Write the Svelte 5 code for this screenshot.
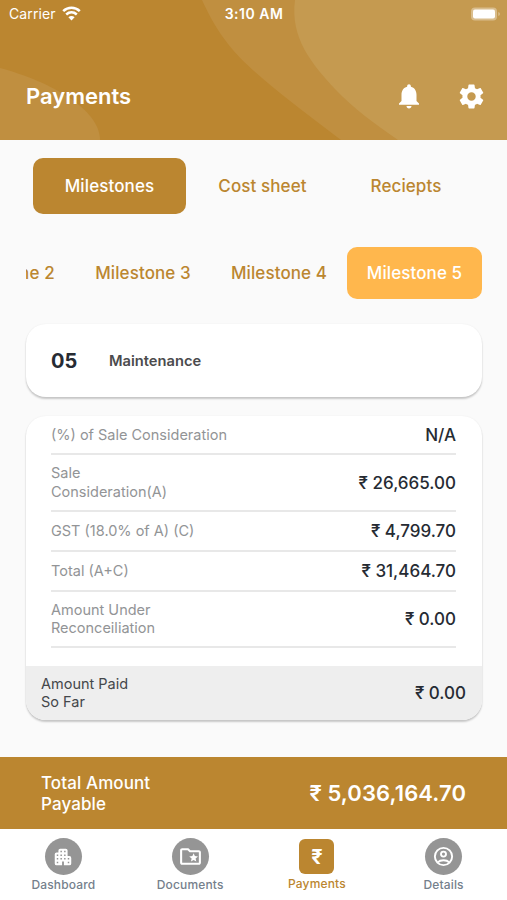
<script lang="ts">
  type Row = { label: string; value: string };

  const tabs = ["Milestones", "Cost sheet", "Reciepts"];
  const milestones = [2, 3, 4, 5];

  const rows: Row[] = [
    { label: "(%) of Sale Consideration", value: "N/A" },
    { label: "Sale\nConsideration(A)", value: "₹ 26,665.00" },
    { label: "GST (18.0% of A) (C)", value: "₹ 4,799.70" },
    { label: "Total (A+C)", value: "₹ 31,464.70" },
    { label: "Amount Under\nReconceiliation", value: "₹ 0.00" },
  ];

  const nav = ["Dashboard", "Documents", "Payments", "Details"];

  let activeTab = $state("Milestones");
  let activeMilestone = $state(5);
  let activeNav = $state("Payments");
</script>

<div class="screen">
  <header>
    <svg class="waves" viewBox="0 0 507 140" preserveAspectRatio="none">
      <path d="M0 68C52 82 100 110 100 140H0Z" fill="#c08f40" />
      <path d="M202 0C220 40 240 59 262 78C286 99 314 119 341 140H507V0Z" fill="#c08f40" />
      <path d="M295 0C290 38 312 64 335 89C354 109 374 123 398 140H507V0Z" fill="#c59a50" />
    </svg>
    <div class="status">
      <span class="carrier">
        Carrier
        <svg width="19" height="15" viewBox="0 0 19 15" fill="none" stroke="#fff" stroke-width="2.6">
          <path d="M1.2 5.1C6 .7 13 .7 17.8 5.1" />
          <path d="M4.2 8.5C7.4 5.7 11.6 5.7 14.8 8.5" />
          <path d="M9.5 14.4L6.4 11.2C8.3 9.6 10.7 9.6 12.6 11.2Z" fill="#fff" stroke="none" />
        </svg>
      </span>
      <span class="time">3:10 AM</span>
      <svg class="battery" width="31" height="16" viewBox="0 0 31 16">
        <rect x="1" y="1.5" width="26" height="13" rx="4" fill="#fff" fill-opacity=".35" />
        <rect x="3" y="3.5" width="22" height="9" rx="2" fill="#fff" />
        <path d="M28.5 6c1.6.7 1.6 3.3 0 4z" fill="#fff" fill-opacity=".5" />
      </svg>
    </div>
    <div class="title-row">
      <h1>Payments</h1>
      <div class="actions">
        <svg width="30" height="30" viewBox="0 0 24 24" fill="#fff">
          <path d="M12 22c1.1 0 2-.9 2-2h-4c0 1.1.89 2 2 2zm6-6v-5c0-3.07-1.64-5.64-4.5-6.32V4c0-.83-.67-1.5-1.5-1.5s-1.5.67-1.5 1.5v.68C7.63 5.36 6 7.92 6 11v5l-2 2v1h16v-1l-2-2z" />
        </svg>
        <svg width="29" height="29" viewBox="0 0 24 24" fill="#fff">
          <path d="M19.43 12.98c.04-.32.07-.64.07-.98s-.03-.66-.07-.98l2.11-1.65c.19-.15.24-.42.12-.64l-2-3.46c-.12-.22-.39-.3-.61-.22l-2.49 1c-.52-.4-1.08-.73-1.69-.98l-.38-2.65C14.46 2.18 14.25 2 14 2h-4c-.25 0-.46.18-.49.42l-.38 2.65c-.61.25-1.17.59-1.69.98l-2.49-1c-.23-.09-.49 0-.61.22l-2 3.46c-.13.22-.07.49.12.64l2.11 1.65c-.04.32-.07.65-.07.98s.03.66.07.98l-2.11 1.65c-.19.15-.24.42-.12.64l2 3.46c.12.22.39.3.61.22l2.49-1c.52.4 1.08.73 1.69.98l.38 2.65c.03.24.24.42.49.42h4c.25 0 .46-.18.49-.42l.38-2.65c.61-.25 1.17-.59 1.69-.98l2.49 1c.23.09.49 0 .61-.22l2-3.46c.12-.22.07-.49-.12-.64l-2.11-1.65zM12 15.5c-1.93 0-3.5-1.57-3.5-3.5s1.57-3.5 3.5-3.5 3.5 1.57 3.5 3.5-1.57 3.5-3.5 3.5z" />
        </svg>
      </div>
    </div>
  </header>

  <main>
    <div class="tabs">
      {#each tabs as tab}
        <button class:active={activeTab === tab} onclick={() => (activeTab = tab)}>{tab}</button>
      {/each}
    </div>

    <div class="milestones">
      {#each milestones as m}
        <button class:active={activeMilestone === m} onclick={() => (activeMilestone = m)}>Milestone {m}</button>
      {/each}
    </div>

    <section class="card stage">
      <strong>05</strong>
      <span>Maintenance</span>
    </section>

    <section class="card details">
      <div class="rows">
        {#each rows as row}
          <div class="row">
            <span class="label">{row.label}</span>
            <span class="value">{row.value}</span>
          </div>
        {/each}
      </div>
      <div class="paid">
        <span class="label">Amount Paid<br />So Far</span>
        <span class="value">₹ 0.00</span>
      </div>
    </section>
  </main>

  <div class="total">
    <span>Total Amount<br />Payable</span>
    <strong>₹ 5,036,164.70</strong>
  </div>

  <nav>
    {#each nav as item}
      <button class:active={activeNav === item} onclick={() => (activeNav = item)}>
        <span class="icon">
          {#if item === "Dashboard"}
            <svg width="22" height="22" viewBox="0 0 24 24" fill="#fff">
              <path fill-rule="evenodd" d="M17 11V5a2 2 0 0 0-2-2H9a2 2 0 0 0-2 2v2H5a2 2 0 0 0-2 2v10a2 2 0 0 0 2 2h6v-4h2v4h6a2 2 0 0 0 2-2v-6a2 2 0 0 0-2-2zM6.8 18.8H5.2v-1.6h1.6zm0-4H5.2v-1.6h1.6zm0-4H5.2V9.2h1.6zm4 4H9.2v-1.6h1.6zm0-4H9.2V9.2h1.6zm0-4H9.2V5.2h1.6zm4 8h-1.6v-1.6h1.6zm0-4h-1.6V9.2h1.6zm0-4h-1.6V5.2h1.6zm4 12h-1.6v-1.6h1.6zm0-4h-1.6v-1.6h1.6z" />
            </svg>
          {:else if item === "Documents"}
            <svg width="25" height="25" viewBox="0 0 24 24" fill="#fff">
              <path d="M20 6h-8l-2-2H4c-1.1 0-2 .9-2 2v12c0 1.1.9 2 2 2h16c1.1 0 2-.9 2-2V8c0-1.1-.9-2-2-2zm0 12H4V6h5.17l2 2H20z" />
              <path d="M15 8.8l1.2 2.8 3 .3-2.3 2 .7 3-2.6-1.6-2.6 1.6.7-3-2.3-2 3-.3z" />
            </svg>
          {:else if item === "Payments"}
            ₹
          {:else}
            <svg width="23" height="23" viewBox="0 0 24 24" fill="none" stroke="#fff" stroke-width="2">
              <circle cx="12" cy="12" r="9" />
              <circle cx="12" cy="9.5" r="2.6" />
              <path d="M6 18.2c2.8-3 9.2-3 12 0" />
            </svg>
          {/if}
        </span>
        <span class="name">{item}</span>
      </button>
    {/each}
  </nav>
</div>

<style>
  :global(body) {
    margin: 0;
    background: #fafafa;
  }

  .screen {
    --gold: #bb8630;
    width: 507px;
    height: 900px;
    display: flex;
    flex-direction: column;
    overflow: hidden;
    background: #fafafa;
    font-family: Inter, "Liberation Sans", sans-serif;
    color: #262b33;
  }

  button {
    border: 0;
    padding: 0;
    background: none;
    font: inherit;
    color: inherit;
    letter-spacing: inherit;
    white-space: nowrap;
  }

  header {
    position: relative;
    flex: none;
    height: 140px;
    background: var(--gold);
    color: #fff;
  }

  .waves {
    position: absolute;
    inset: 0;
    width: 100%;
    height: 100%;
  }

  .status {
    position: relative;
    display: grid;
    grid-template-columns: 1fr auto 1fr;
    align-items: center;
    height: 27px;
    padding: 0 6px 0 9px;
    font-size: 14px;
  }

  .carrier {
    display: flex;
    align-items: center;
    gap: 6px;
    letter-spacing: 0.1px;
  }

  .time {
    position: relative;
    left: -1px;
    font-weight: 600;
    font-size: 14px;
    letter-spacing: 0.5px;
  }

  .battery {
    justify-self: end;
  }

  .title-row {
    position: relative;
    display: flex;
    align-items: center;
    justify-content: space-between;
    height: 52px;
    padding: 43px 21px 0 26px;
  }

  h1 {
    margin: 0;
    font-size: 22px;
    font-weight: 600;
  }

  .actions {
    display: flex;
    align-items: center;
    gap: 33px;
  }

  main {
    flex: 1;
    padding: 18px 25px 0 26px;
  }

  .tabs {
    display: flex;
    height: 56px;
    padding-left: 7px;
    color: var(--gold);
    font-size: 17px;
    font-weight: 500;
    letter-spacing: 0.1px;
  }

  .tabs button {
    width: 153px;
    border-radius: 10px;
  }

  .tabs button:last-child {
    width: 134px;
  }

  .tabs button.active {
    background: var(--gold);
    color: #fff;
  }

  .milestones {
    display: flex;
    justify-content: flex-end;
    height: 52px;
    margin-top: 33px;
    overflow: hidden;
    color: var(--gold);
    font-size: 17px;
    font-weight: 500;
    letter-spacing: 0.1px;
  }

  .milestones button {
    flex: none;
    width: 136px;
    border-radius: 10px;
  }

  .milestones button.active {
    width: 135px;
    background: #ffb74d;
    color: #fff;
  }

  .card {
    background: #fff;
    border-radius: 20px;
    box-shadow: 0 2px 2px rgba(0, 0, 0, 0.2), 0 0 2px rgba(0, 0, 0, 0.06);
  }

  .stage {
    display: flex;
    align-items: center;
    height: 73px;
    margin-top: 25px;
    padding-left: 25px;
  }

  .stage strong {
    width: 58px;
    font-size: 20px;
    font-weight: 700;
  }

  .stage span {
    font-size: 14.7px;
    font-weight: 600;
    color: #4b4b4d;
  }

  .details {
    height: 304px;
    margin-top: 19px;
    display: flex;
    flex-direction: column;
    justify-content: space-between;
    overflow: hidden;
  }

  .rows {
    padding: 0 26px 0 25px;
  }

  .row {
    box-sizing: border-box;
    display: flex;
    align-items: center;
    justify-content: space-between;
    min-height: 40px;
    padding: 9px 0;
    border-bottom: 2px solid #e8e8e8;
  }

  .row:first-child {
    min-height: 0;
    padding-top: 10px;
  }

  .label {
    font-size: 14.5px;
    line-height: 18.3px;
    color: #929496;
    white-space: pre-line;
  }

  .value {
    font-size: 17px;
    line-height: 18px;
    font-weight: 500;
  }

  .paid {
    display: flex;
    align-items: center;
    justify-content: space-between;
    height: 54px;
    padding: 0 16px 0 15px;
    background: #eee;
  }

  .paid .label {
    color: #44474b;
  }

  .total {
    display: flex;
    flex: none;
    align-items: center;
    justify-content: space-between;
    height: 72px;
    padding: 0 41px;
    background: var(--gold);
    color: #fff;
    font-size: 17px;
    line-height: 21px;
    font-weight: 500;
    letter-spacing: 0.1px;
  }

  .total span {
    padding-top: 2px;
  }

  .total strong {
    font-size: 22px;
    font-weight: 600;
  }

  nav {
    display: grid;
    grid-template-columns: repeat(4, 1fr);
    flex: none;
    height: 71px;
    background: #fff;
    color: #75808c;
  }

  nav button {
    display: flex;
    flex-direction: column;
    align-items: center;
    padding-top: 9px;
  }

  .icon {
    display: grid;
    place-items: center;
    width: 37px;
    height: 37px;
    border-radius: 50%;
    background: #959595;
  }

  .name {
    margin-top: 2px;
    font-size: 12px;
    line-height: 15px;
    font-weight: 500;
    letter-spacing: 0.15px;
  }

  nav .active {
    padding-top: 10px;
    color: var(--gold);
  }

  nav .active .icon {
    width: 35px;
    height: 35px;
    border-radius: 6px;
    background: var(--gold);
    color: #fff;
    font-size: 20px;
    font-weight: 700;
  }
</style>
